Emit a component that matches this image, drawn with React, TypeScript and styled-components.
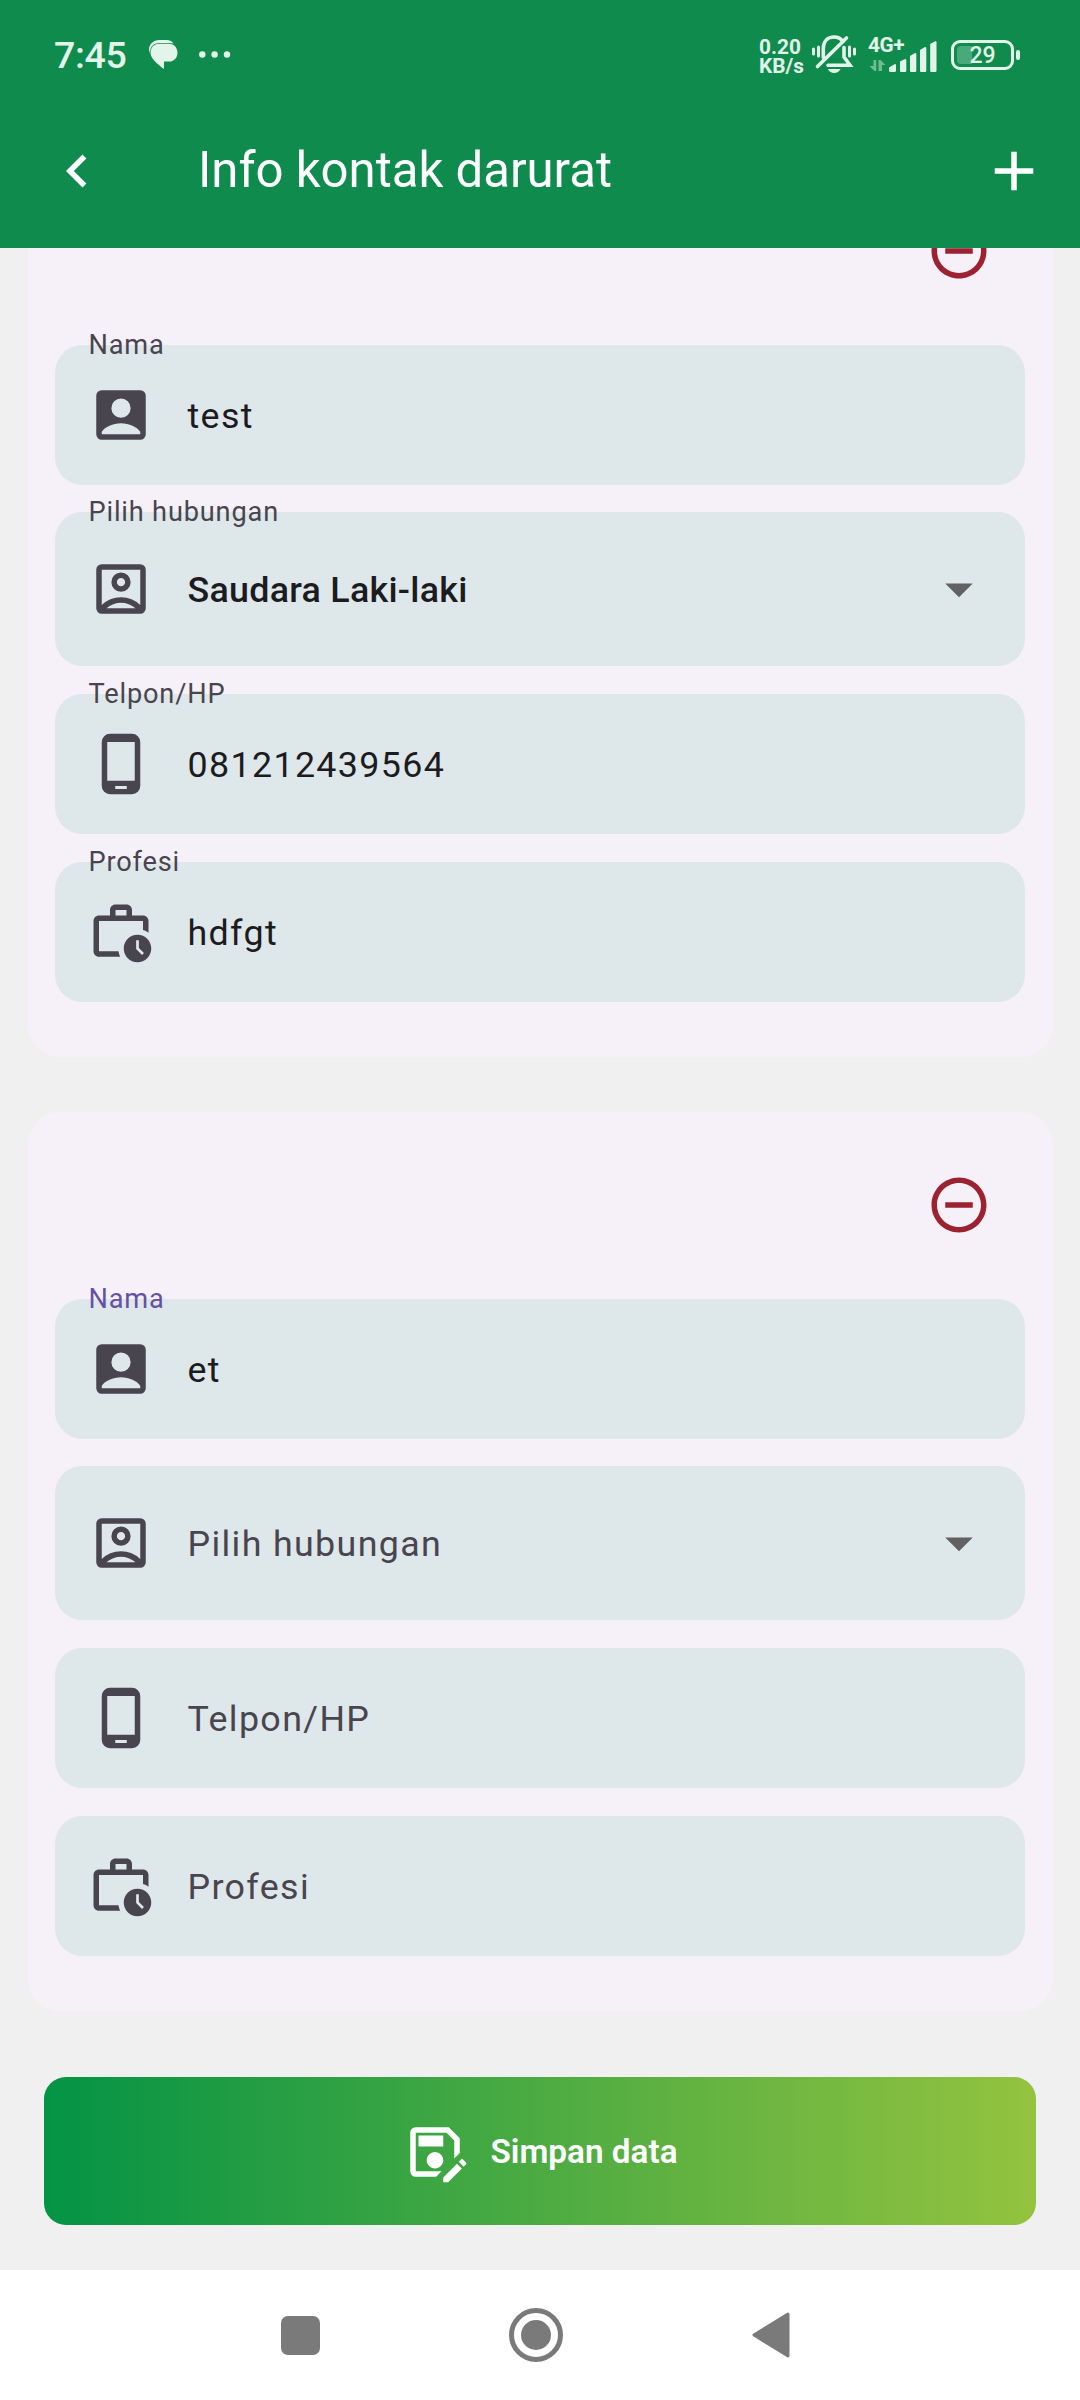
import React from "react";
import styled, { createGlobalStyle } from "styled-components";
import {
  MdAdd,
  MdArrowDropDown,
  MdChevronLeft,
  MdOutlineSaveAs,
  MdOutlineWorkHistory,
  MdRemoveCircleOutline,
} from "react-icons/md";

const GlobalStyle = createGlobalStyle`
  *, *::before, *::after { box-sizing: border-box; }
  body { margin: 0; font-family: Roboto, "Noto Sans", sans-serif; }
  button { font-family: inherit; border: 0; padding: 0; background: none; }
  svg { display: block; flex-shrink: 0; }
`;

const Screen = styled.div`
  width: 1080px;
  height: 2400px;
  display: flex;
  flex-direction: column;
  background: #f0f0f0;
  overflow: hidden;
`;

const Header = styled.header`
  height: 248px;
  flex-shrink: 0;
  background: #0f8c4d;
  color: #fff;
`;

/* ---- status bar ---- */

const StatusBar = styled.div`
  height: 94px;
  display: flex;
  align-items: flex-start;
  justify-content: space-between;
  padding: 0 60px 0 54px;
  color: #e3f5eb;
`;

const StatusGroup = styled.div`
  display: flex;
  align-items: center;
  height: 80px;
  padding-top: 29px;
`;

const Clock = styled.span`
  width: 95px;
  font-size: 37.5px;
  line-height: 50px;
  font-weight: 500;
  letter-spacing: -0.3px;
`;

const NotificationIcons = styled.div`
  display: flex;
  align-items: center;
  gap: 21px;
`;

const NetSpeed = styled.div`
  width: 53px;
  font-size: 20.8px;
  line-height: 19px;
  font-weight: 700;
  padding-top: 4px;
  white-space: pre-line;
`;

const Signal = styled.div`
  display: flex;
  position: relative;
  margin-left: 12px;
`;

const NetworkType = styled.span`
  position: absolute;
  left: 0;
  top: -3px;
  font-size: 20.8px;
  line-height: 20px;
  font-weight: 700;
  letter-spacing: -0.4px;
`;

const BatteryWrap = styled.div`
  display: flex;
  align-items: center;
  gap: 2px;
  margin-left: 14px;
`;

const BatteryBody = styled.div`
  position: relative;
  width: 63px;
  height: 30px;
  border: 3px solid #e3f5eb;
  border-radius: 9px;
  padding: 3px;
  display: flex;
`;

const BatteryFill = styled.div<{ $level: number }>`
  width: ${(p) => p.$level}%;
  border-radius: 4px 0 0 4px;
  background: rgba(227, 245, 235, 0.28);
`;

const BatteryText = styled.span`
  position: absolute;
  inset: 0;
  text-align: center;
  font-size: 23px;
  line-height: 25px;
  font-weight: 500;
`;

const BatteryTip = styled.div`
  width: 4px;
  height: 10px;
  border-radius: 2px;
  background: #e3f5eb;
`;

/* ---- app bar ---- */

const AppBar = styled.div`
  height: 154px;
  display: flex;
  align-items: center;
  padding: 0 33px 0 44px;
`;

const BarButton = styled.button`
  width: 66px;
  height: 66px;
  color: #fff;
`;

const Title = styled.h1`
  flex: 1;
  margin: 0 0 3px 88px;
  font-size: 49.1px;
  line-height: 60px;
  font-weight: 400;
`;

/* ---- scrolling form ---- */

const Content = styled.main`
  flex: 1;
  min-height: 0;
  overflow: hidden;
`;

const ScrollArea = styled.div`
  margin-top: -90.4px;
  display: flex;
  flex-direction: column;
  gap: 54.7px;
  padding: 0 27.5px;
`;

const Card = styled.section`
  display: flex;
  flex-direction: column;
  gap: 27.5px;
  padding: 27.5px 27.5px 55px;
  border-radius: 33px;
  background: #f6f1f9;
`;

const RemoveButton = styled.button`
  width: 132px;
  height: 132px;
  align-self: flex-end;
  display: flex;
  align-items: center;
  justify-content: center;
  color: #9c2232;
`;

const FieldBox = styled.div<{ $tall?: boolean }>`
  position: relative;
  height: ${(p) => (p.$tall ? 154 : 140.25)}px;
  display: flex;
  align-items: center;
  gap: 33px;
  padding: 0 33px;
  border-radius: 27.5px;
  background: #dee7e9;
  color: #49454f;
`;

const FloatingLabel = styled.label<{ $focused?: boolean }>`
  position: absolute;
  left: 33.5px;
  top: -16px;
  font-size: 27.2px;
  line-height: 32px;
  letter-spacing: 0.82px;
  white-space: nowrap;
  color: ${(p) => (p.$focused ? "#6750a4" : "#49454f")};
`;

const FieldText = styled.span<{ $filled?: boolean; $strong?: boolean }>`
  flex: 1;
  padding: 2px 0 0 0.5px;
  font-size: 35.8px;
  line-height: 48px;
  letter-spacing: ${(p) => (p.$strong ? 0.28 : 1.36)}px;
  font-weight: ${(p) => (p.$strong ? 500 : 400)};
  color: ${(p) => (p.$filled ? "#1c1b1f" : "#49454f")};
`;

const Caret = styled(MdArrowDropDown)`
  color: #616161;
`;

const SaveButton = styled.button`
  height: 148.5px;
  margin: 11.5px 16.5px 0;
  padding-top: 1px;
  display: flex;
  align-items: center;
  justify-content: center;
  gap: 22px;
  border-radius: 22px;
  background: linear-gradient(90deg, #049345, #94c33f);
  color: #fff;
  font-size: 33.3px;
  line-height: 44px;
  font-weight: 600;
`;

const NavBar = styled.nav`
  height: 130px;
  flex-shrink: 0;
  display: flex;
  align-items: center;
  background: #fff;
  padding-left: 281px;
`;

const NavRecent = styled.div`
  width: 39px;
  height: 39px;
  border-radius: 7px;
  background: #7a7a7a;
`;

const NavHome = styled.div`
  width: 54px;
  height: 54px;
  margin: 0 189px;
  border: 5px solid #7a7a7a;
  border-radius: 50%;
  display: flex;
  align-items: center;
  justify-content: center;

  &::after {
    content: "";
    width: 30px;
    height: 30px;
    border-radius: 50%;
    background: #7a7a7a;
  }
`;

/* ---- icons ---- */

const ContactIcon = () => (
  <svg width="66" height="66" viewBox="0 0 24 24" fill="currentColor">
    <path
      fillRule="evenodd"
      d="M5 3h14a2 2 0 0 1 2 2v14a2 2 0 0 1-2 2H5a2 2 0 0 1-2-2V5a2 2 0 0 1 2-2ZM12 6a3.5 3.5 0 1 0 0 7 3.5 3.5 0 0 0 0-7ZM5 19h14v-.9C17.8 16.3 15 15 12 15s-5.800 1.300-7 3.100Z"
    />
  </svg>
);

const RelationIcon = () => (
  <svg width="66" height="66" viewBox="0 -960 960 960" fill="currentColor">
    <path d="M200-246q54-53 125.500-83.500T480-360q83 0 154.500 30.500T760-246v-514H200v514Zm280-194q58 0 99-41t41-99q0-58-41-99t-99-41q-58 0-99 41t-41 99q0 58 41 99t99 41ZM200-120q-33 0-56.500-23.500T120-200v-560q0-33 23.500-56.500T200-840h560q33 0 56.500 23.500T840-760v560q0 33-23.500 56.500T760-120H200Zm69-80h422q-44-39-99.500-59.500T480-280q-56 0-112.500 20.500T269-200Zm211-320q-25 0-42.500-17.500T420-580q0-25 17.500-42.500T480-640q25 0 42.500 17.500T540-580q0 25-17.500 42.500T480-520Z" />
  </svg>
);

const PhoneIcon = () => (
  <svg width="66" height="66" viewBox="0 0 24 24" fill="currentColor">
    <path
      fillRule="evenodd"
      d="M8 1h8a3 3 0 0 1 3 3v16a3 3 0 0 1-3 3H8a3 3 0 0 1-3-3V4a3 3 0 0 1 3-3ZM7 4v14.100h10V4ZM9.900 20v1.100h4.200V20Z"
    />
  </svg>
);

const ChatIcon = () => (
  <svg width="29" height="29" viewBox="0 0 29 29">
    <path
      fill="currentColor"
      d="M10 3.800h10c5 0 8.500 3.900 8.500 9s-3.500 8.800-8.500 8.800h-5V29C8.500 24.500 1.500 18.500 1.500 12.800c0-5.100 3.500-9 8.500-9Z"
    />
    <path
      fill="currentColor"
      d="M24.600 3.600C23 1.200 20.800 0 17.500 0h-7C4 0 0 4.500 0 9.500c0 1.300.2 2.400.7 3.500C.9 7 4.500 3 10.500 3h10c1.500 0 2.900.2 4.100.6Z"
    />
  </svg>
);

const MoreDots = () => (
  <svg width="32" height="7" viewBox="0 0 32 7" fill="currentColor">
    <circle cx="3.300" cy="3.500" r="3.200" />
    <circle cx="15.600" cy="3.500" r="3.200" />
    <circle cx="28" cy="3.500" r="3.200" />
  </svg>
);

const SilentBellIcon = () => (
  <svg width="44" height="39" viewBox="0 0 44 39" fill="none" stroke="currentColor">
    <path
      strokeWidth="3.600"
      strokeLinecap="round"
      d="M11.300 22.500V13.500C11.300 6.500 15.500 2 22 2c4 0 7 1.600 8.800 4.400M32 12.500v9.500l6 8.300H16"
    />
    <path strokeWidth="3.600" strokeLinecap="round" d="M34.500 3 5.500 31.500" />
    <path strokeWidth="3" strokeLinecap="round" d="M1.500 14v5M6.500 12v9M37.500 12v9M42.500 14v5" />
    <path fill="currentColor" stroke="none" d="M15.800 34h12.800c-1.400 2.600-3.600 3.900-6.400 3.900s-5-1.300-6.400-3.900Z" />
  </svg>
);

const SignalIcon = () => (
  <svg width="69" height="34" viewBox="0 0 69 34" fill="currentColor">
    <path opacity=".45" d="M5.500 22h2.700v11H6.500L1.500 28h4ZM10.500 22h2l5 5h-3.500v6h-3.500Z" />
    <path d="M21 29.500 27 26q1 0 1 1v5.500q0 1.500-1.500 1.500h-4Q21 34 21 32.500Z" />
    <path d="M32 23.500 37 21q1.300 0 1.300 1v10.500q0 1.500-1.300 1.500h-4Q32 34 32 32.500Z" />
    <path d="M42 18 47 15q1.300 0 1.300 1v16.500q0 1.500-1.300 1.500h-4Q42 34 42 32.500Z" />
    <path d="M52 12 57 9q1.300 0 1.300 1v22.500q0 1.500-1.300 1.500h-4Q52 34 52 32.500Z" />
    <path d="M62.200 6 67.200 3.200q1.300 0 1.300 1v28.300q0 1.500-1.300 1.500h-4q-1 0-1-1.500Z" />
  </svg>
);

const BackTriangle = () => (
  <svg width="38" height="46" viewBox="0 0 38 46">
    <path
      d="M36 2 2 23l34 21Z"
      fill="#7a7a7a"
      stroke="#7a7a7a"
      strokeWidth="3"
      strokeLinejoin="round"
    />
  </svg>
);

/* ---- form ---- */

type FieldProps = {
  icon: React.ReactNode;
  label: string;
  value?: string;
  select?: boolean;
  focused?: boolean;
};

function Field({ icon, label, value, select, focused }: FieldProps) {
  return (
    <FieldBox $tall={select}>
      {value && <FloatingLabel $focused={focused}>{label}</FloatingLabel>}
      {icon}
      <FieldText $filled={!!value} $strong={!!value && select}>
        {value || label}
      </FieldText>
      {select && <Caret size={66} />}
    </FieldBox>
  );
}

type Contact = {
  name: string;
  relation?: string;
  phone?: string;
  job?: string;
  editing?: boolean;
};

const contacts: Contact[] = [
  { name: "test", relation: "Saudara Laki-laki", phone: "081212439564", job: "hdfgt" },
  { name: "et", editing: true },
];

function ContactCard({ contact }: { contact: Contact }) {
  return (
    <Card>
      <RemoveButton aria-label="Hapus">
        <MdRemoveCircleOutline size={66} />
      </RemoveButton>
      <Field icon={<ContactIcon />} label="Nama" value={contact.name} focused={contact.editing} />
      <Field icon={<RelationIcon />} label="Pilih hubungan" value={contact.relation} select />
      <Field icon={<PhoneIcon />} label="Telpon/HP" value={contact.phone} />
      <Field icon={<MdOutlineWorkHistory size={66} />} label="Profesi" value={contact.job} />
    </Card>
  );
}

export default function App() {
  return (
    <Screen>
      <GlobalStyle />
      <Header>
        <StatusBar>
          <StatusGroup>
            <Clock>7:45</Clock>
            <NotificationIcons>
              <ChatIcon />
              <MoreDots />
            </NotificationIcons>
          </StatusGroup>
          <StatusGroup>
            <NetSpeed>{"0.20\nKB/s"}</NetSpeed>
            <SilentBellIcon />
            <Signal>
              <NetworkType>4G+</NetworkType>
              <SignalIcon />
            </Signal>
            <BatteryWrap>
              <BatteryBody>
                <BatteryFill $level={29} />
                <BatteryText>29</BatteryText>
              </BatteryBody>
              <BatteryTip />
            </BatteryWrap>
          </StatusGroup>
        </StatusBar>
        <AppBar>
          <BarButton aria-label="Kembali">
            <MdChevronLeft size={66} />
          </BarButton>
          <Title>Info kontak darurat</Title>
          <BarButton aria-label="Tambah">
            <MdAdd size={66} />
          </BarButton>
        </AppBar>
      </Header>
      <Content>
        <ScrollArea>
          {contacts.map((contact) => (
            <ContactCard key={contact.name} contact={contact} />
          ))}
          <SaveButton>
            <MdOutlineSaveAs size={66} />
            Simpan data
          </SaveButton>
        </ScrollArea>
      </Content>
      <NavBar>
        <NavRecent />
        <NavHome />
        <BackTriangle />
      </NavBar>
    </Screen>
  );
}
